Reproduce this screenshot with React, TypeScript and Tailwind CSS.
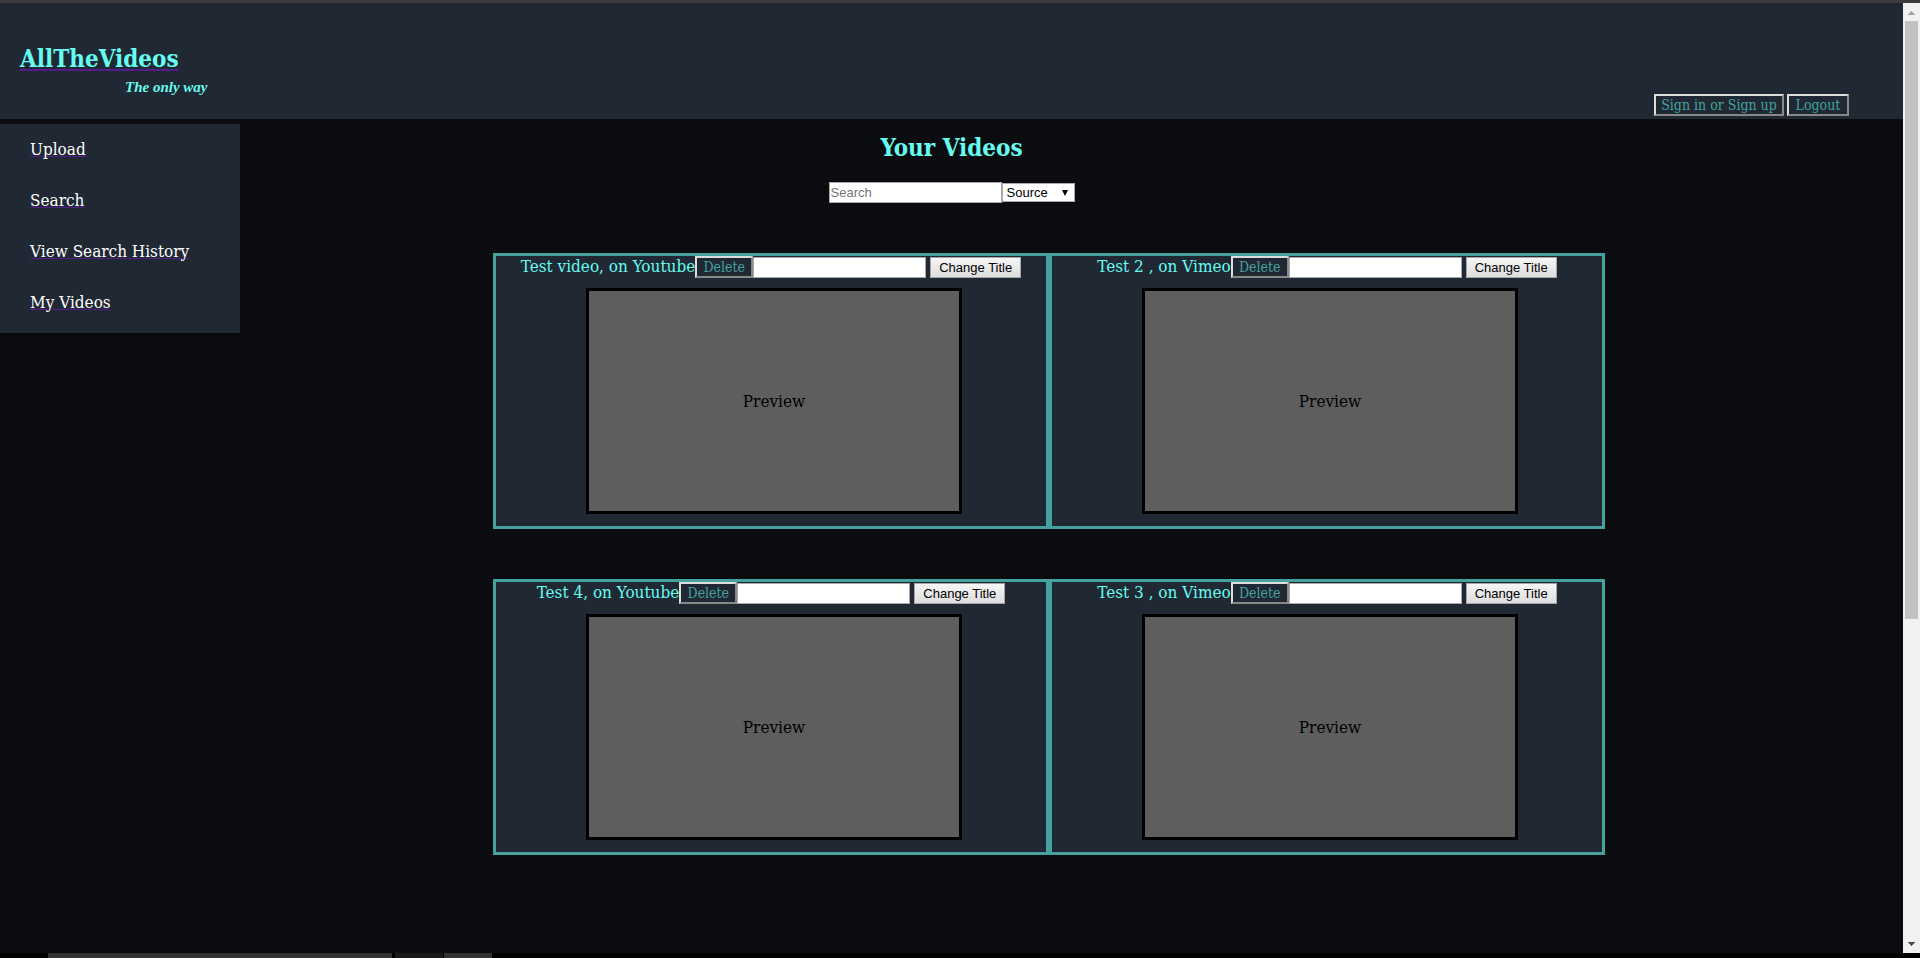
const slab = "font-['DejaVu_Serif_Condensed','DejaVu_Serif',serif]";
const sans = "font-['Liberation_Sans',Arial,sans-serif]";

const outset =
  "h-[22px] shrink-0 border-2 border-t-[#dddddd] border-l-[#dddddd] border-r-[#888888] border-b-[#888888] bg-[#1f2833] text-center text-sm leading-[18px] whitespace-nowrap text-[#45a29e]";

const navItems = ["Upload", "Search", "View Search History", "My Videos"];

const videos = [
  { id: 1, title: "Test video, on Youtube" },
  { id: 2, title: "Test 2 , on Vimeo" },
  { id: 4, title: "Test 4, on Youtube" },
  { id: 3, title: "Test 3 , on Vimeo" },
];

function Header() {
  return (
    <header className="flex h-[116px] items-end justify-between bg-[#1f2833] pr-[54px] pb-[3px] pl-5">
      <div className="flex flex-col self-start pt-[39px]">
        <h1 className="text-2xl leading-[34px] font-bold text-[#66fcf1]">
          <a
            href="#home"
            className="underline decoration-[#551a8b] decoration-2 underline-offset-2"
          >
            AllTheVideos
          </a>
        </h1>
        <p className="pl-[105px] font-['Liberation_Serif',serif] text-[15px] leading-[22px] font-bold text-[#66fcf1] italic">
          The only way
        </p>
      </div>
      <div className="flex gap-[3px]">
        <button type="button" className={`${outset} w-[130px]`}>
          Sign in or Sign up
        </button>
        <button type="button" className={`${outset} w-[62px]`}>
          Logout
        </button>
      </div>
    </header>
  );
}

function Sidebar() {
  return (
    <nav className="mt-[5px] w-60 shrink-0 bg-[#1f2833] pt-[13px] pb-[19px] pl-[30px]">
      <ul className="flex flex-col gap-[27px]">
        {navItems.map((item) => (
          <li key={item} className="h-6 text-[17px] leading-6 text-white">
            <a
              href="#nav"
              className="underline decoration-[#551a8b] decoration-1 underline-offset-1"
            >
              {item}
            </a>
          </li>
        ))}
      </ul>
    </nav>
  );
}

function VideoCard({ title }: { title: string }) {
  return (
    <article className="flex h-[276px] w-[556px] flex-col items-center border-3 border-[#45a29e] bg-[#1f2833]">
      <div className="flex items-start">
        <h3 className="h-[22px] text-[17px] leading-5 whitespace-nowrap text-[#66fcf1]">
          {title}
        </h3>
        <button type="button" className={`${outset} w-[58px]`}>
          Delete
        </button>
        <input
          type="text"
          aria-label={`New title for ${title}`}
          className={`${sans} mt-px h-[21px] w-[173px] border border-[#a9a9a9] bg-white px-px text-[13px]`}
        />
        <button
          type="button"
          className={`${sans} mt-px ml-1 h-[21px] w-[91px] border border-[#a6a6a6] bg-linear-to-b from-[#f6f6f6] to-[#dddddd] text-[13px] leading-[19px] whitespace-nowrap text-black`}
        >
          Change Title
        </button>
      </div>
      <div className="flex w-full justify-center pt-[10px] pl-[6px]">
        <div className="flex h-[226px] w-[376px] items-center justify-center border-3 border-black bg-[#5e5e5e] pt-[2px] text-[17px] text-black">
          Preview
        </div>
      </div>
    </article>
  );
}

function Scrollbar() {
  return (
    <div className="flex w-[17px] shrink-0 flex-col items-center bg-[#f1f1f1]" aria-hidden="true">
      <svg className="h-[18px] w-[17px] shrink-0" viewBox="0 0 17 18">
        <path d="M5 12h7v-1h-1v-1h-1V9H9V8H8v1H7v1H6v1H5z" fill="#a3a3a3" />
      </svg>
      <div className="h-[598px] w-[13px] bg-[#c1c1c1]" />
      <svg className="mt-auto h-[17px] w-[17px] shrink-0" viewBox="0 0 17 17">
        <path d="M5 6h7v1h-1v1h-1v1H9v1H8V9H7V8H6V7H5z" fill="#505050" />
      </svg>
    </div>
  );
}

export default function App() {
  return (
    <div className={`${slab} flex min-h-screen flex-col bg-[#0b0c10]`}>
      <div className="h-[3px] bg-[#3c3a3b]" />
      <div className="flex grow">
        <div className="flex min-w-0 grow flex-col">
          <Header />
          <div className="flex items-start">
            <Sidebar />
            <main className="flex grow flex-col items-center">
              <div className="flex flex-col items-center pr-60">
                <h2 className="mt-[13px] text-2xl leading-8 font-bold text-[#66fcf1]">
                  Your Videos
                </h2>
                <form className={`${sans} mt-[18px] flex items-center text-[13px]`}>
                  <input
                    type="search"
                    aria-label="Search videos"
                    placeholder="Search"
                    className="h-[21px] w-[173px] appearance-none border border-[#a9a9a9] bg-white px-px text-black placeholder:text-[#757575]"
                  />
                  <div className="grid h-[19px] w-[73px] items-center border border-[#a9a9a9] bg-white text-black">
                    <select
                      aria-label="Source"
                      className="col-start-1 row-start-1 h-[17px] w-full appearance-none bg-white pl-1 leading-[17px]"
                    >
                      <option>Source</option>
                      <option>Youtube</option>
                      <option>Vimeo</option>
                    </select>
                    <svg
                      className="pointer-events-none col-start-1 row-start-1 mr-[6px] h-[6px] w-[6px] justify-self-end"
                      viewBox="0 0 6 6"
                    >
                      <path d="M0 0h6L3 6z" fill="#000" />
                    </svg>
                  </div>
                </form>
              </div>
              <section className="mt-[50px] grid grid-cols-[556px_556px] gap-y-[50px] pr-[45px]">
                {videos.map((video) => (
                  <VideoCard key={video.id} title={video.title} />
                ))}
              </section>
            </main>
          </div>
        </div>
        <Scrollbar />
      </div>
      <div className="flex h-[5px] bg-black pl-12">
        <div className="w-[344px] bg-[#333333]" />
        <div className="ml-[3px] w-12 bg-[#1a1a1a]" />
        <div className="ml-[1px] w-12 bg-[#333333]" />
      </div>
    </div>
  );
}
